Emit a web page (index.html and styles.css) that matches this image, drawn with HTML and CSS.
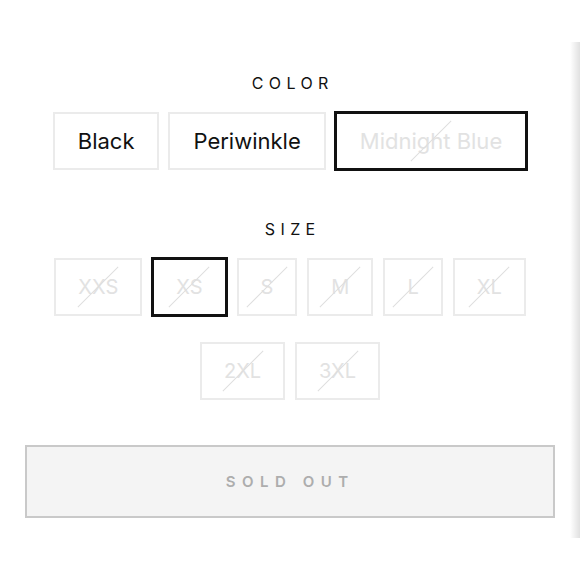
FILE: index.html
```html
<!DOCTYPE html>
<html lang="en">
<head>
<meta charset="utf-8">
<title>Product options</title>
<link rel="stylesheet" href="styles.css">
</head>
<body>
<div class="panel">
  <section class="group">
    <h3 class="label">COLOR</h3>
    <div class="options color-options">
      <button class="opt">Black</button>
      <button class="opt">Periwinkle</button>
      <button class="opt selected unavailable">Midnight Blue</button>
    </div>
  </section>
  <section class="group">
    <h3 class="label size-label">SIZE</h3>
    <div class="options size-options">
      <button class="opt size unavailable">XXS</button>
      <button class="opt size selected unavailable">XS</button>
      <button class="opt size unavailable">S</button>
      <button class="opt size unavailable">M</button>
      <button class="opt size unavailable">L</button>
      <button class="opt size unavailable">XL</button>
      <button class="opt size unavailable">2XL</button>
      <button class="opt size unavailable">3XL</button>
    </div>
  </section>
  <button class="sold-out" disabled>SOLD OUT</button>
</div>
<div class="edge-shadow"></div>
</body>
</html>
```
FILE: styles.css
```css
* { box-sizing: border-box; }
html, body { margin: 0; padding: 0; background: #fff; }
body {
  font-family: Inter, "Noto Sans", "Liberation Sans", sans-serif;
  color: #111;
  width: 580px;
  height: 580px;
  overflow: hidden;
  position: relative;
}
.panel {
  width: 530px;
  margin-left: 25px;
  padding-top: 73px;
  display: flex;
  flex-direction: column;
  align-items: center;
}
.group {
  display: flex;
  flex-direction: column;
  align-items: center;
  width: 100%;
}
.label {
  margin: 0 0 19px 0;
  font-size: 16px;
  line-height: 20px;
  font-weight: 400;
  letter-spacing: 5.4px;
  padding-left: 5.4px;
  color: #111;
}
.size-label { margin-top: 49px; }
.options {
  display: flex;
  flex-wrap: wrap;
  justify-content: center;
  width: 100%;
}
.color-options { gap: 9px; }
.size-options { gap: 26px 10px; }
.opt {
  position: relative;
  height: 58px;
  padding: 0 23px;
  border: 2px solid #ebebeb;
  background: #fff;
  font-family: inherit;
  font-size: 22px;
  color: #111;
  line-height: 1;
  cursor: pointer;
}
.opt.size {
  padding: 0 22px;
  font-size: 20px;
}
.opt.selected {
  border-color: #111;
  box-shadow: 0 0 0 1px #111;
}
.opt.unavailable { color: #e2e2e2; }
.opt.unavailable::after {
  content: "";
  position: absolute;
  left: 50%;
  top: 50%;
  width: 57px;
  height: 1px;
  background: #dedede;
  transform: translate(-50%, -50%) rotate(-45deg);
}
.sold-out {
  margin-top: 45px;
  width: 530px;
  height: 73px;
  border: 2px solid #c9c9c9;
  background: #f4f4f4;
  color: #adadad;
  font-family: inherit;
  font-size: 15px;
  font-weight: 600;
  letter-spacing: 6.5px;
  padding-left: 6.5px;
}
.edge-shadow {
  position: absolute;
  right: 0;
  top: 42px;
  width: 10px;
  height: 496px;
  background: linear-gradient(to right, rgba(0,0,0,0), rgba(0,0,0,0.12));
}
```
